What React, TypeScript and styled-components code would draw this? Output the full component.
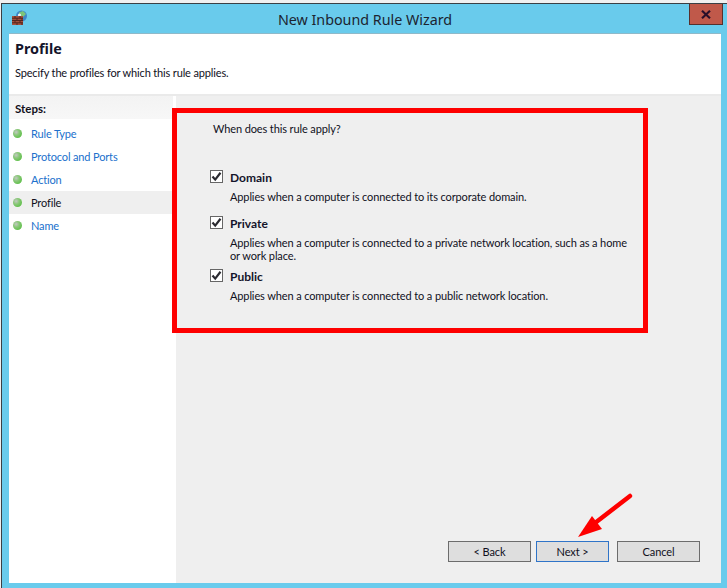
import React from "react";
import styled, { createGlobalStyle } from "styled-components";

const Global = createGlobalStyle`
  html, body { margin: 0; padding: 0; background: #f0f0f0; }
  body { font-family: Lato, Roboto, "Liberation Sans", sans-serif; color: #10101c; }
  #root { width: 727px; height: 588px; }
`;

const Page = styled.div`
  position: relative;
  width: 727px;
  height: 588px;
  box-sizing: border-box;
  padding: 3px 0 0 1px;
  overflow: hidden;
`;

const Frame = styled.div`
  height: 100%;
  box-sizing: border-box;
  display: flex;
  flex-direction: column;
  background: #69cbec;
  border-top: 1px solid #3a3f44;
  border-left: 1px solid #3a3f44;
  padding: 0 6px 5px 7px;
`;

const TitleBar = styled.div`
  position: relative;
  flex: 0 0 29px;
  display: flex;
  align-items: center;
  justify-content: center;
  font-family: "Noto Sans", sans-serif;
  font-size: 14.3px;
  color: #1c2430;
  padding-top: 1px;
  box-sizing: border-box;
`;

const AppIcon = styled.svg`
  position: absolute;
  left: 3px;
  top: 6px;
  width: 16px;
  height: 15px;
`;

const CloseButton = styled.div`
  position: absolute;
  right: -2px;
  top: 0;
  width: 34px;
  height: 21px;
  box-sizing: border-box;
  background: #c0594a;
  border: 1px solid #57302c;
  border-top: none;
  display: flex;
  align-items: center;
  justify-content: center;
`;

const Client = styled.div`
  flex: 1;
  display: flex;
  flex-direction: column;
  min-height: 0;
  background: #fff;
  border-top: 1px solid #8fb9c9;
`;

const Header = styled.div`
  flex: 0 0 62px;
  box-sizing: border-box;
  padding: 6px 0 0 6px;
  background: #fff;
  border-bottom: 2px solid #eaeaea;
`;

const HeaderTitle = styled.div`
  font-family: "Noto Sans", sans-serif;
  font-size: 14.4px;
  font-weight: 700;
  line-height: 18px;
  color: #14142a;
`;

const HeaderSub = styled.div`
  font-size: 11px;
  letter-spacing: -0.15px;
  line-height: 15px;
  margin-top: 7px;
`;

const Body = styled.div`
  flex: 1;
  display: flex;
  min-height: 0;
`;

const Steps = styled.div`
  flex: 0 0 164px;
  background: #fff;
`;

const StepsHeader = styled.div`
  height: 23px;
  box-sizing: border-box;
  padding: 5px 0 0 6px;
  font-size: 11.5px;
  line-height: 16px;
  font-weight: 700;
  background: linear-gradient(#f3f3f3, #f7f7f7);
`;

const StepList = styled.div`
  padding-top: 3px;
`;

const Step = styled.div<{ $active?: boolean }>`
  height: 23px;
  display: flex;
  align-items: center;
  padding-left: 4px;
  gap: 9px;
  font-size: 11px;
  letter-spacing: -0.15px;
  color: ${(p) => (p.$active ? "#10101c" : "#2070cc")};
  background: ${(p) => (p.$active ? "#efefef" : "transparent")};
`;

const Dot = styled.span`
  width: 9px;
  height: 9px;
  border-radius: 50%;
  flex: none;
  background: radial-gradient(circle at 35% 35%, #c4c8c4 0, #8bc77a 35%, #5fc04a 75%);
`;

const Main = styled.div`
  flex: 1;
  display: flex;
  flex-direction: column;
  margin-left: 3px;
  background: #efefef;
  min-width: 0;
`;

const Content = styled.div`
  flex: 1;
  padding: 25px 0 0 37px;
  font-size: 11px;
  letter-spacing: -0.12px;
`;

const Question = styled.div`
  line-height: 15px;
  margin-bottom: 34px;
`;

const Option = styled.div<{ $gap: number }>`
  display: grid;
  grid-template-columns: 13px 1fr;
  column-gap: 7px;
  margin-left: -3px;
  margin-bottom: ${(p) => p.$gap}px;
`;

const Check = styled.span`
  width: 13px;
  height: 13px;
  box-sizing: border-box;
  border: 1px solid #666;
  background: #fff;
  display: flex;
  align-items: center;
  justify-content: center;
`;

const OptionName = styled.div`
  font-weight: 700;
  font-size: 12px;
  letter-spacing: 0;
  line-height: 15px;
  color: #14142a;
`;

const OptionText = styled.div`
  grid-column: 2;
  line-height: 13px;
  margin-top: 5px;
  width: 405px;
`;

const Footer = styled.div`
  display: flex;
  justify-content: flex-end;
  gap: 5px;
  padding: 0 21px 21px 0;
`;

const Button = styled.div<{ $w: number; $focus?: boolean; $ml?: number }>`
  width: ${(p) => p.$w}px;
  height: 21px;
  box-sizing: border-box;
  margin-left: ${(p) => p.$ml ?? 0}px;
  border: 1px solid ${(p) => (p.$focus ? "#2f74c8" : "#6c6c6c")};
  background: #dedede;
  font-size: 11px;
  letter-spacing: -0.1px;
  display: flex;
  align-items: center;
  justify-content: center;
`;

const Highlight = styled.div`
  position: absolute;
  left: 172px;
  top: 108px;
  width: 476px;
  height: 225px;
  box-sizing: border-box;
  border: 5px solid #fe0000;
  pointer-events: none;
`;

const Arrow = styled.svg`
  position: absolute;
  left: 575px;
  top: 490px;
  width: 60px;
  height: 50px;
`;

const CheckMark = () => (
  <svg width="11" height="11" viewBox="0 0 11 11">
    <path d="M1.5 5.5 L4.2 8.6 L9.5 1.8" fill="none" stroke="#2a2a30" strokeWidth="2.2" />
  </svg>
);

const steps = ["Rule Type", "Protocol and Ports", "Action", "Profile", "Name"];

export default function App() {
  return (
    <Page>
      <Global />
      <Frame>
        <TitleBar>
          <AppIcon viewBox="0 0 16 15">
            <circle cx="9.5" cy="6" r="5.5" fill="#3f86c8" />
            <path d="M7 2.5 L11 1 L14 4 L11 7 L7 5.5 Z" fill="#7cc47a" />
            <circle cx="7.5" cy="5" r="1.6" fill="#eaf6fb" />
            <rect x="0" y="6" width="11" height="9" fill="#a4503c" />
            <path d="M0 8.2H11M0 10.5H11M0 12.8H11M3 6V8.2M8 6V8.2M5 8.2V10.5M10 8.2V10.5M3 10.5V12.8M8 10.5V12.8M5 12.8V15M10 12.8V15" stroke="#54241c" strokeWidth="1" fill="none" />
          </AppIcon>
          New Inbound Rule Wizard
          <CloseButton>
            <svg width="10" height="9" viewBox="0 0 10 9">
              <path d="M1 0.8 L9 8.2 M9 0.8 L1 8.2" stroke="#2a0f2a" strokeWidth="2.2" />
            </svg>
          </CloseButton>
        </TitleBar>
        <Client>
          <Header>
            <HeaderTitle>Profile</HeaderTitle>
            <HeaderSub>Specify the profiles for which this rule applies.</HeaderSub>
          </Header>
          <Body>
            <Steps>
              <StepsHeader>Steps:</StepsHeader>
              <StepList>
                {steps.map((s) => (
                  <Step key={s} $active={s === "Profile"}>
                    <Dot />
                    <span>{s}</span>
                  </Step>
                ))}
              </StepList>
            </Steps>
            <Main>
              <Content>
                <Question>When does this rule apply?</Question>
                <Option $gap={13}>
                  <Check><CheckMark /></Check>
                  <OptionName>Domain</OptionName>
                  <OptionText>Applies when a computer is connected to its corporate domain.</OptionText>
                </Option>
                <Option $gap={7}>
                  <Check><CheckMark /></Check>
                  <OptionName>Private</OptionName>
                  <OptionText>Applies when a computer is connected to a private network location, such as a home or work place.</OptionText>
                </Option>
                <Option $gap={0}>
                  <Check><CheckMark /></Check>
                  <OptionName>Public</OptionName>
                  <OptionText>Applies when a computer is connected to a public network location.</OptionText>
                </Option>
              </Content>
              <Footer>
                <Button $w={83}>&lt; Back</Button>
                <Button $w={73} $focus>Next &gt;</Button>
                <Button $w={83} $ml={3}>Cancel</Button>
              </Footer>
            </Main>
          </Body>
        </Client>
      </Frame>
      <Highlight />
      <Arrow viewBox="0 0 60 50">
        <path d="M55 6 L20 33" stroke="#fe0000" strokeWidth="4.5" strokeLinecap="round" />
        <path d="M3 47 L17 26 L27 39 Z" fill="#fe0000" />
      </Arrow>
    </Page>
  );
}
